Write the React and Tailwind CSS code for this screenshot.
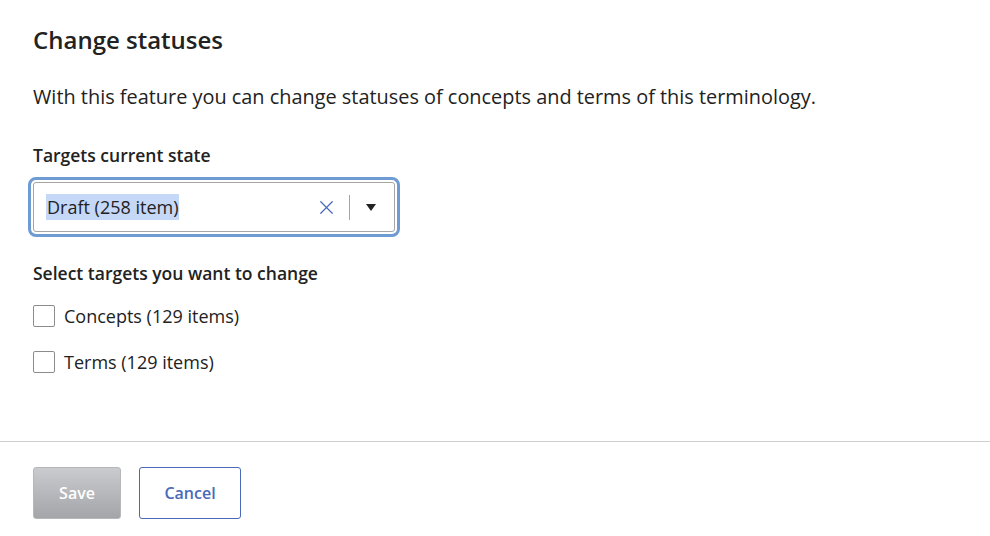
import { X } from "lucide-react";

export default function App() {
  return (
    <div
      className="w-[990px] h-[536px] bg-white text-[#222] overflow-hidden"
      style={{ fontFamily: "'Open Sans', Lato, sans-serif" }}
    >
      {/* body */}
      <div className="px-[33px] pt-[24px] h-[441px]">
        <h1 className="text-[24px] font-semibold leading-[32px]">Change statuses</h1>
        <p className="mt-[28px] text-[19.9px] leading-[26px]">
          With this feature you can change statuses of concepts and terms of this terminology.
        </p>

        <div className="mt-[33px] text-[17.5px] font-semibold leading-[24px]">Targets current state</div>
        <div className="mt-[15px] w-[362px] h-[50px] rounded-[3px] border border-[#a5a5a5] outline-[3px] outline-[#6e9bd2] outline-offset-[2px] outline flex items-center">
          <span className="ml-[12px] text-[18px] leading-[26px] bg-[#c6d8f8] px-[1px]">Draft (258 item)</span>
          <div className="flex-1" />
          <X className="w-[23px] h-[23px] text-[#4a69b8]" strokeWidth={1.3} />
          <div className="ml-[11px] w-px h-[25px] bg-[#a5a5a5]" />
          <svg className="ml-[16px] mr-[18px]" width="10" height="7" viewBox="0 0 10 7">
            <path d="M0 0 L10 0 L5 7 Z" fill="#222" />
          </svg>
        </div>

        <div className="mt-[29px] text-[17.5px] font-semibold leading-[24px]">Select targets you want to change</div>
        <div className="mt-[20px] flex flex-col gap-[24px]">
          {["Concepts (129 items)", "Terms (129 items)"].map((label) => (
            <label key={label} className="flex items-center gap-[9px] text-[18px] leading-[22px]">
              <span className="w-[22px] h-[22px] border border-[#8c8c8c] rounded-[2px] bg-white" />
              {label}
            </label>
          ))}
        </div>
      </div>

      {/* footer */}
      <div className="border-t border-[#cfcfcf] px-[33px] pt-[25px] flex gap-[18px]">
        <button className="w-[88px] h-[52px] rounded-[3px] bg-gradient-to-b from-[#c9cbcf] to-[#a3a5a9] text-white text-[16px] font-semibold border border-[#b5b7ba]">
          Save
        </button>
        <button className="w-[102px] h-[52px] rounded-[3px] bg-white border border-[#4a69b8] text-[#4a69b8] text-[16px] font-semibold">
          Cancel
        </button>
      </div>
    </div>
  );
}
